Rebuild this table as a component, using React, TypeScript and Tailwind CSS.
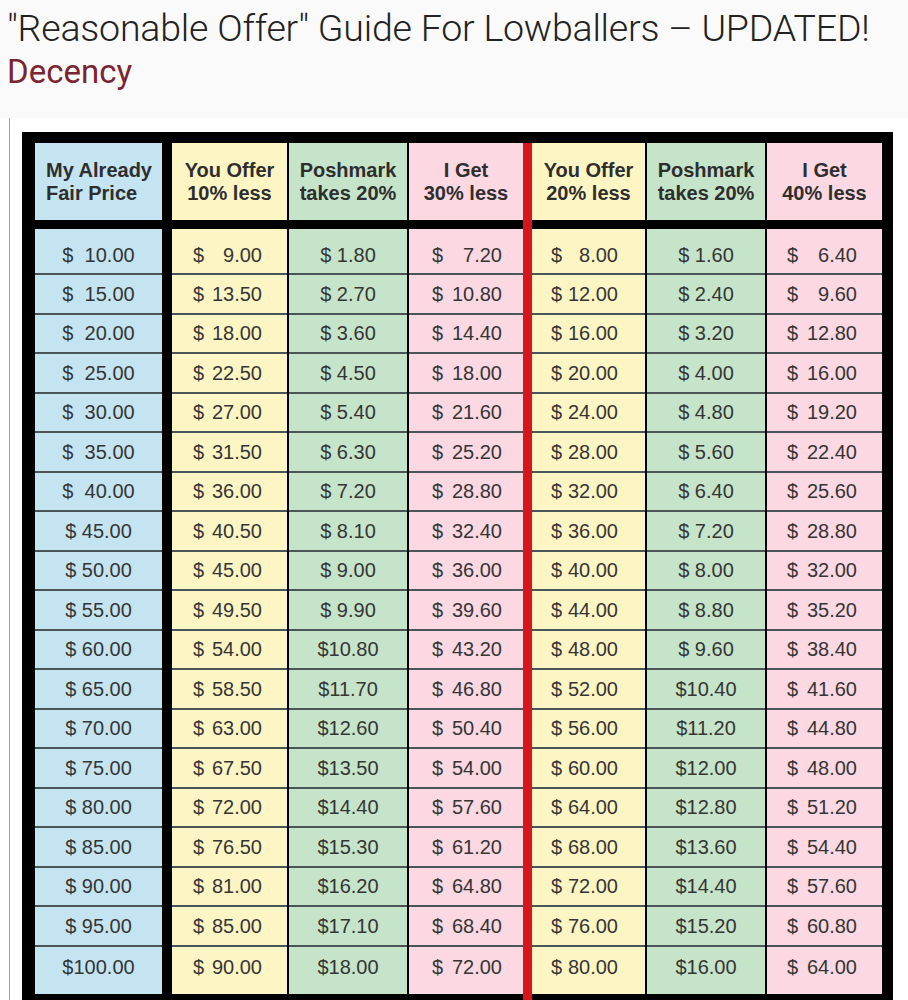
import React from "react";

type Col = {
  bg: string;
  width: string;
  head: [string, string];
  left?: boolean;
  split?: string; // padding classes when $ and number are split apart
  values: string[];
};

const prices = [10, 15, 20, 25, 30, 35, 40, 45, 50, 55, 60, 65, 70, 75, 80, 85, 90, 95, 100];

const fmt = (n: number) => n.toFixed(2);

const col1 = prices.map((p, i) => (p >= 100 ? `$${fmt(p)}` : i < 7 ? `$  ${fmt(p)}` : `$ ${fmt(p)}`));
const fee = (n: number) => (n < 10 ? `$ ${fmt(n)}` : `$${fmt(n)}`);

// the chart itself prints $85.00 for 95 (typo kept as in the original)
const offer10 = prices.map((p) => (p === 95 ? "85.00" : fmt(p * 0.9)));

const columns: Col[] = [
  { bg: "bg-[#c4e4f2]", width: "w-[127px]", head: ["My Already", "Fair Price"], left: true, values: col1 },
  { bg: "bg-[#fdf6c4]", width: "w-[115px]", head: ["You Offer", "10% less"], split: "pl-[21px] pr-[25px]", values: offer10 },
  { bg: "bg-[#c6e4c9]", width: "w-[118px]", head: ["Poshmark", "takes 20%"], values: prices.map((p) => fee(p * 0.9 * 0.2)) },
  { bg: "bg-[#fbd8e2]", width: "w-[114px]", head: ["I Get", "30% less"], split: "pl-[23px] pr-[21px]", values: prices.map((p) => fmt(p * 0.72)) },
  { bg: "bg-[#fdf6c4]", width: "w-[113px]", head: ["You Offer", "20% less"], split: "pl-[19px] pr-[27px]", values: prices.map((p) => fmt(p * 0.8)) },
  { bg: "bg-[#c6e4c9]", width: "w-[118px]", head: ["Poshmark", "takes 20%"], values: prices.map((p) => fee(p * 0.8 * 0.2)) },
  { bg: "bg-[#fbd8e2]", width: "w-[115px]", head: ["I Get", "40% less"], split: "pl-[20px] pr-[25px]", values: prices.map((p) => fmt(p * 0.64)) },
];

function Column({ col }: { col: Col }) {
  return (
    <div className={`flex flex-col ${col.width}`}>
      <div
        className={`${col.bg} h-[77px] flex flex-col justify-center font-bold text-[20px] leading-[23px] text-[#2e2e2e] ${
          col.left ? "items-start pl-[11px]" : "items-center text-center"
        }`}
      >
        <span>{col.head[0]}</span>
        <span>{col.head[1]}</span>
      </div>
      <div className="h-[9px]" />
      {col.values.map((v, i) => {
        const last = i === col.values.length - 1;
        const size = i === 0 ? "h-[46px] pt-[7px]" : last ? "h-[47.5px] pb-[7px]" : "h-[39.5px]";
        return (
          <div
            key={i}
            className={`${col.bg} ${size} ${last ? "" : "border-b-2 border-[#4b5558]"} flex items-center text-[20px] text-[#353535] whitespace-pre ${
              col.split ? `justify-between ${col.split}` : "justify-center"
            }`}
          >
            {col.split ? (
              <>
                <span>$</span>
                <span>{v}</span>
              </>
            ) : (
              <span>{v}</span>
            )}
          </div>
        );
      })}
    </div>
  );
}

export default function App() {
  return (
    <div className="w-[908px] h-[1000px] overflow-hidden bg-white" style={{ fontFamily: "'Liberation Sans', Arial, sans-serif" }}>
      <div className="h-[118px] bg-[#fafafa] pl-[7px] pt-[6px]" style={{ fontFamily: "Roboto, 'Noto Sans', sans-serif" }}>
        <h1 className="text-[37.5px] font-light leading-[44px] text-[#222] tracking-[-0.2px]">
          "Reasonable Offer" Guide For Lowballers – UPDATED!
        </h1>
        <div className="text-[33px] leading-[40px] text-[#7b2533] mt-[2px]">Decency</div>
      </div>

      <div className="flex">
        <div className="ml-[9px] w-px h-[900px] bg-[#a0a0a0]" />
        <div className="ml-[12px] mt-[14px] bg-black pt-[11px] pl-[13px] pr-[11px] pb-[11px] flex">
          <Column col={columns[0]} />
          <div className="w-[10px]" />
          <Column col={columns[1]} />
          <div className="w-[2px]" />
          <Column col={columns[2]} />
          <div className="w-[2px]" />
          <Column col={columns[3]} />
          <div className="w-[9px] bg-[#d8141c]" />
          <Column col={columns[4]} />
          <div className="w-[2px]" />
          <Column col={columns[5]} />
          <div className="w-[2px]" />
          <Column col={columns[6]} />
        </div>
      </div>
    </div>
  );
}
